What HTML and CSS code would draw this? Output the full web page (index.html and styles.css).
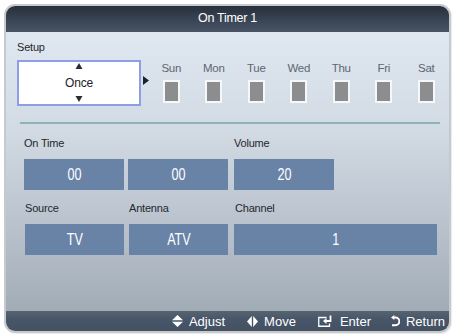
FILE: index.html
```html
<!DOCTYPE html>
<html>
<head>
<meta charset="utf-8">
<link rel="stylesheet" href="styles.css">
</head>
<body>
<div class="panel">
  <div class="titlebar">On Timer 1</div>
  <div class="content">
    <div class="label setup-label">Setup</div>
    <div class="setup-row">
      <div class="once-box">
        <svg class="tri" width="8" height="6" viewBox="0 0 8 6"><polygon points="0.5,6 4,0 7.5,6" fill="#2a2d31"/></svg>
        <span class="once-text">Once</span>
        <svg class="tri" width="8" height="6" viewBox="0 0 8 6"><polygon points="0.5,0 7.5,0 4,6" fill="#2a2d31"/></svg>
      </div>
      <svg class="play" width="6" height="9" viewBox="0 0 6 9"><polygon points="0,0 6,4.5 0,9" fill="#1e2226"/></svg>
      <div class="days">
        <div class="day"><span class="day-name">Sun</span><span class="check"></span></div>
        <div class="day"><span class="day-name">Mon</span><span class="check"></span></div>
        <div class="day"><span class="day-name">Tue</span><span class="check"></span></div>
        <div class="day"><span class="day-name">Wed</span><span class="check"></span></div>
        <div class="day"><span class="day-name">Thu</span><span class="check"></span></div>
        <div class="day"><span class="day-name">Fri</span><span class="check"></span></div>
        <div class="day"><span class="day-name">Sat</span><span class="check"></span></div>
      </div>
    </div>
    <div class="divider"></div>
    <div class="fields">
      <div class="label f-label">On Time</div>
      <div class="label f-label"></div>
      <div class="label f-label c3">Volume</div>
      <div class="value"><span>00</span></div>
      <div class="value"><span>00</span></div>
      <div class="value c3 narrow"><span>20</span></div>
      <div class="label f-label row2">Source</div>
      <div class="label f-label row2">Antenna</div>
      <div class="label f-label row2 c3">Channel</div>
      <div class="value r2"><span>TV</span></div>
      <div class="value r2"><span>ATV</span></div>
      <div class="value c3 r2"><span>1</span></div>
    </div>
  </div>
  <div class="footer">
    <div class="hint">
      <svg width="11" height="12" viewBox="0 0 11 12"><polygon points="0,5.3 5.5,0 11,5.3" fill="#fff"/><polygon points="0,6.7 11,6.7 5.5,12" fill="#fff"/></svg>
      <span>Adjust</span>
    </div>
    <div class="hint">
      <svg width="11" height="11" viewBox="0 0 11 11"><polygon points="0,5.5 4.8,0 4.8,11" fill="#fff"/><polygon points="6.2,0 11,5.5 6.2,11" fill="#fff"/></svg>
      <span>Move</span>
    </div>
    <div class="hint enter">
      <svg width="15" height="12" viewBox="0 0 15 12"><path d="M8.5 2.5 H0.75 V11.25 H11.5 V8.5" fill="none" stroke="#fff" stroke-width="1.3"/><path d="M12.5 0.5 V6 H7.5" fill="none" stroke="#fff" stroke-width="1.8"/><polygon points="5,6 8.5,3 8.5,9" fill="#fff"/></svg>
      <span>Enter</span>
    </div>
    <div class="hint ret">
      <svg width="9" height="12" viewBox="0 0 9 12"><path d="M2.5 2.5 H4.5 A3.8 3.8 0 0 1 4.5 10.2 H1" fill="none" stroke="#fff" stroke-width="1.9"/><polygon points="0,2.5 3.3,0 3.3,5" fill="#fff"/></svg>
      <span>Return</span>
    </div>
  </div>
</div>
</body>
</html>
```

FILE: styles.css
```css
html, body {
  margin: 0;
  padding: 0;
  background: #ffffff;
}

body {
  font-family: "Liberation Sans", Arial, sans-serif;
  width: 454px;
  height: 335px;
  overflow: hidden;
}

.panel {
  margin: 4px 0 0 4px;
  width: 443px;
  height: 325px;
  border: 2px solid #c6cacf;
  border-radius: 11px;
  overflow: hidden;
  display: flex;
  flex-direction: column;
  box-shadow: 1px 1px 1px rgba(0, 0, 0, 0.08);
}

.titlebar {
  height: 26px;
  flex: none;
  background: linear-gradient(#27303b, #3b4656 60%, #485464);
  color: #ffffff;
  font-size: 12.5px;
  line-height: 24px;
  text-align: center;
  letter-spacing: -0.3px;
}

.content {
  flex: 1;
  background: linear-gradient(#dfe7f0, #d2dae4 35%, #b9c2cc 70%, #a2acb6);
  padding: 9px 0 0 11px;
}

.label {
  font-size: 11px;
  line-height: 13px;
  height: 13px;
  color: #23282e;
  letter-spacing: -0.2px;
}

.setup-row {
  display: flex;
  align-items: flex-start;
  margin-top: 6px;
}

.once-box {
  width: 120px;
  border: 2px solid #8c9ee4;
  background: #ffffff;
  display: flex;
  flex-direction: column;
  align-items: center;
  justify-content: space-between;
  padding: 1px 0 2px;
  box-sizing: content-box;
  height: 39px;
}

.once-text {
  font-size: 12px;
  line-height: 14px;
  color: #1e2226;
  letter-spacing: -0.2px;
}

.tri {
  display: block;
}

.play {
  display: block;
  margin: 16px 1px 0 2px;
}

.days {
  display: grid;
  grid-template-columns: repeat(7, 42.5px);
}

.day {
  display: flex;
  flex-direction: column;
  align-items: center;
  gap: 5px;
  padding-top: 2px;
}

.day-name {
  font-size: 11.5px;
  line-height: 13px;
  color: #5e6670;
  letter-spacing: -0.3px;
}

.check {
  display: block;
  width: 13px;
  height: 19px;
  border: 2px solid #f5f7f9;
  background: #8c8d8f;
}

.divider {
  margin: 16px 0 0 3px;
  width: 420px;
  height: 2px;
  background: #8eb1bb;
}

.fields {
  display: grid;
  grid-template-columns: 100px 100px 205px;
  column-gap: 4px;
  margin: 13px 0 0 7px;
}

.f-label {
  margin-bottom: 9px;
}

.row2 {
  margin-top: 12px;
  padding-left: 1px;
}

.c3 {
  margin-left: 2px;
}

.value {
  height: 31px;
  background: #6983a7;
  color: #ffffff;
  font-size: 17px;
  line-height: 31px;
  text-align: center;
}

.value span {
  display: inline-block;
  transform: scaleX(0.74);
}

.value.r2 {
  margin-left: 1px;
}

.value.c3.r2 {
  margin-left: 2px;
  margin-right: 0;
}

.value.narrow {
  width: 100px;
}

.footer {
  height: 20px;
  flex: none;
  background: linear-gradient(#56636f, #48566a 40%, #435161);
  display: flex;
  justify-content: flex-end;
  align-items: center;
  padding-right: 4px;
  color: #ffffff;
  font-size: 13px;
}

.hint {
  display: flex;
  align-items: center;
  gap: 6px;
  margin-left: 22px;
}

.hint svg {
  display: block;
}

.hint:first-child {
  margin-left: 0;
}

.hint.enter {
  gap: 7px;
}

.hint.ret {
  margin-left: 20px;
}
```
